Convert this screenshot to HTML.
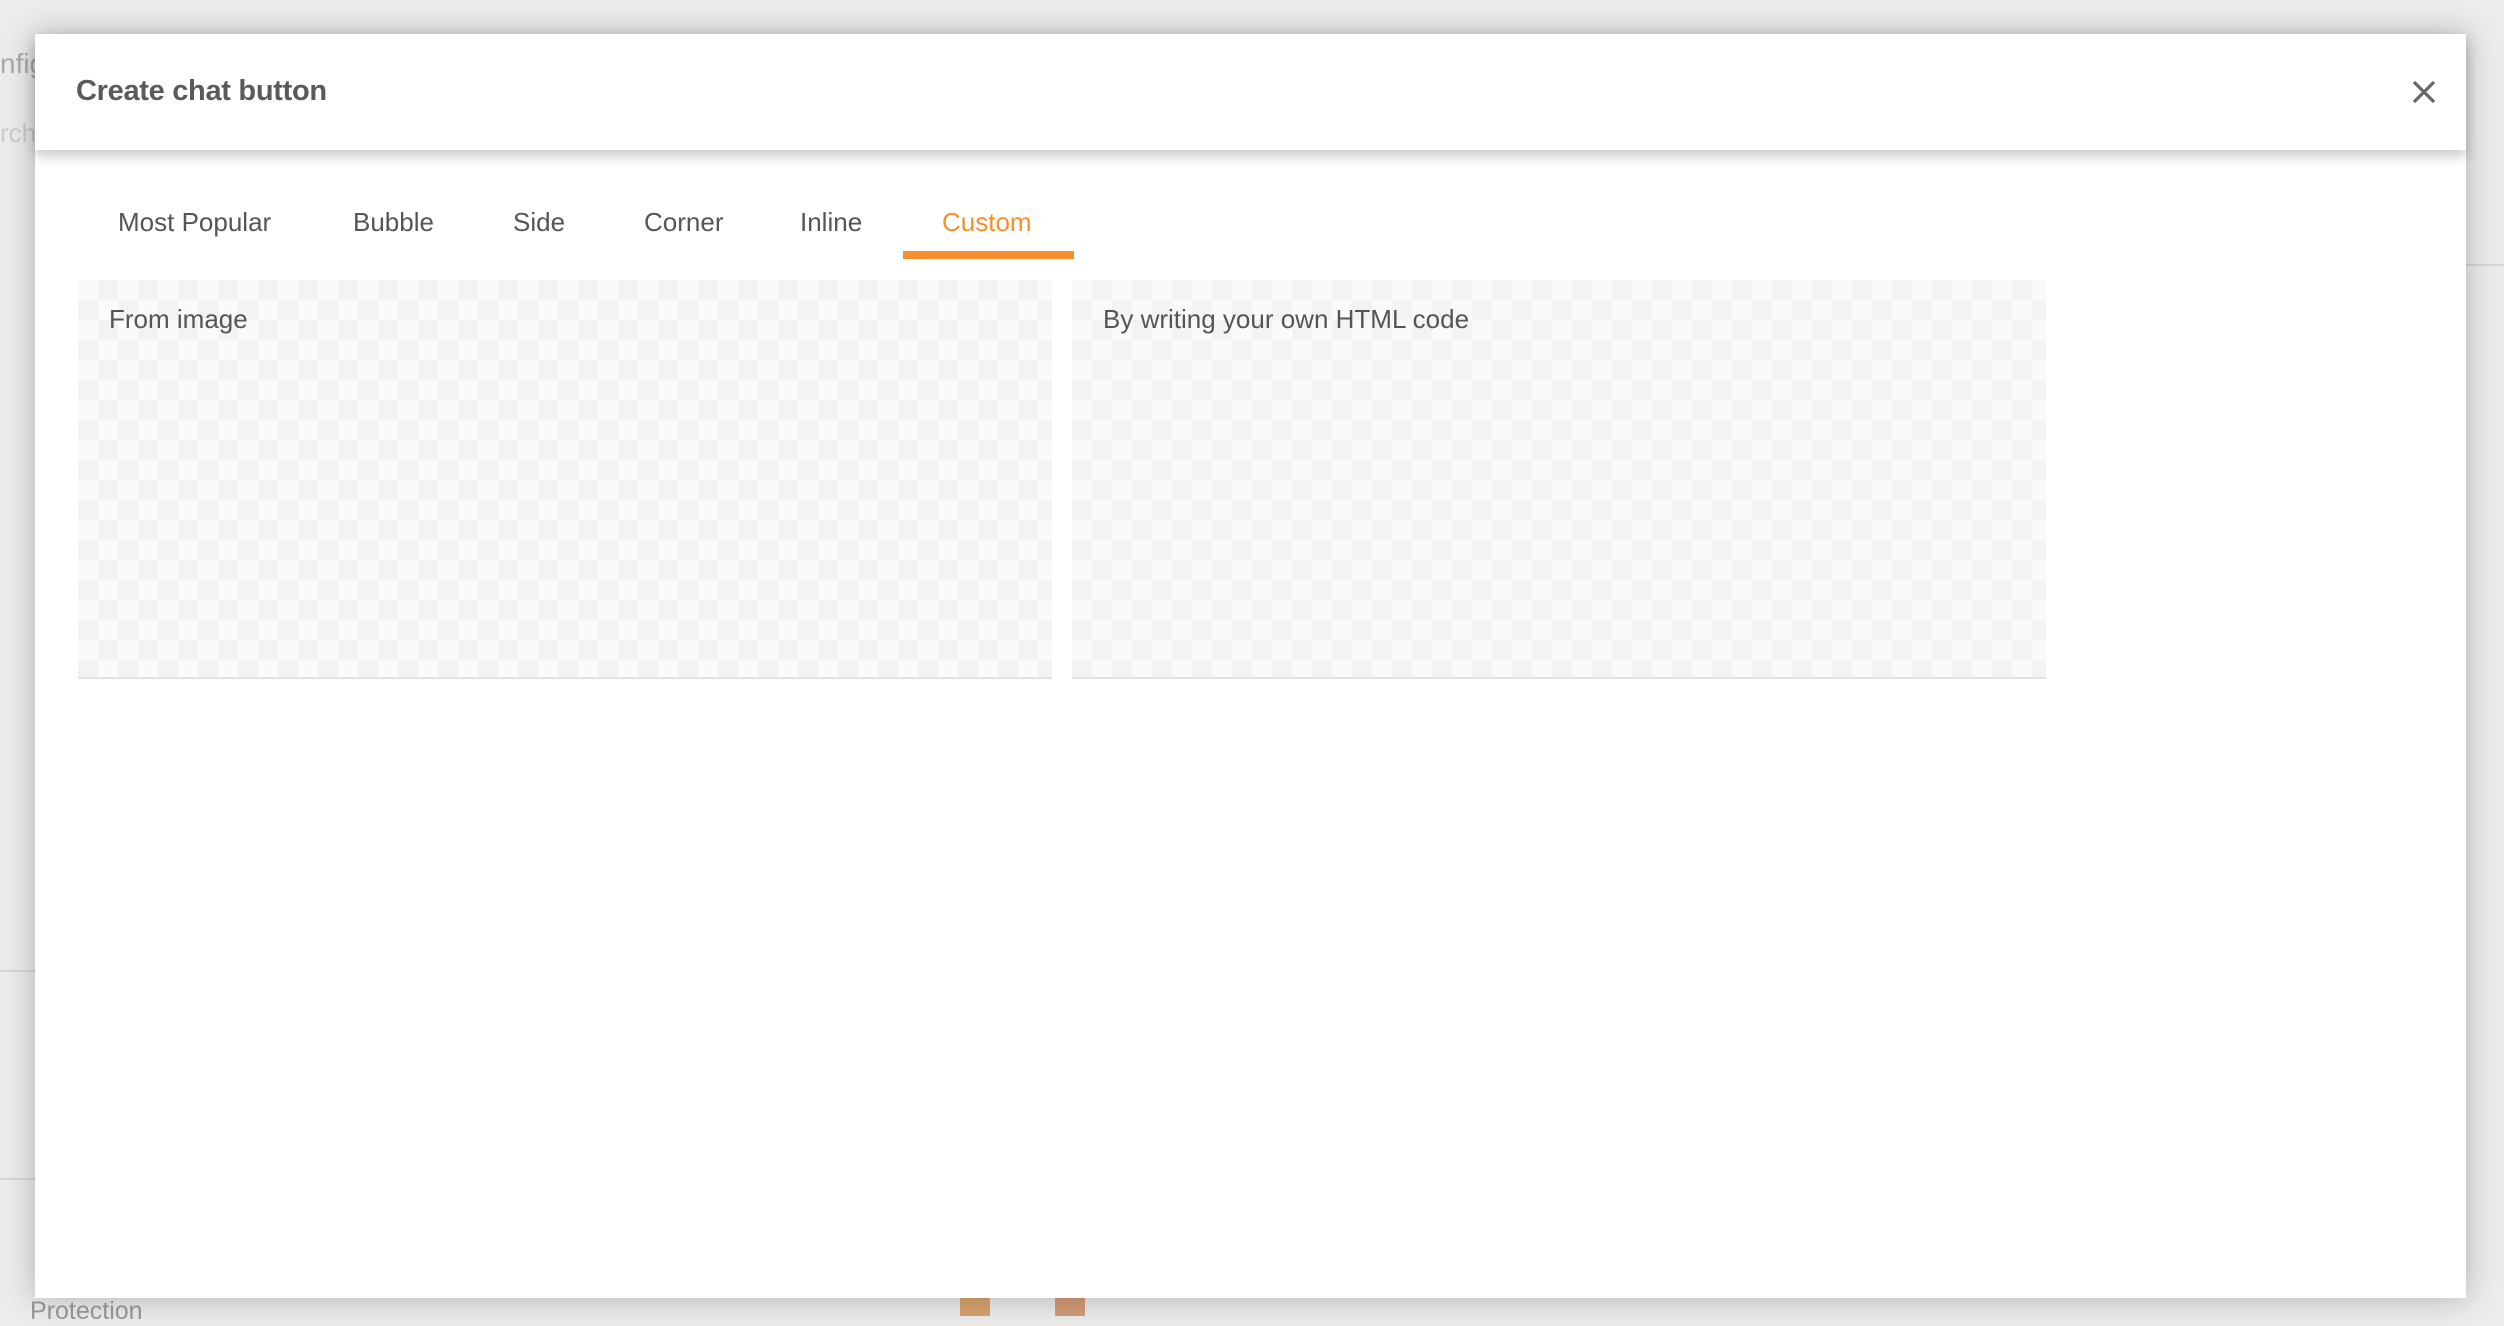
<!DOCTYPE html>
<html><head><meta charset="utf-8"><style>
html,body{margin:0;padding:0;width:2504px;height:1326px;overflow:hidden;background:#ececec;font-family:"Liberation Sans",sans-serif;}
.bg{position:absolute;color:#bdbdbd;font-size:26px;}
.modal{position:absolute;left:35px;top:34px;width:2431px;height:1264px;background:#fff;box-shadow:0 0 30px rgba(0,0,0,.25);}
.hdr{position:absolute;left:0;top:0;width:100%;height:116px;background:#fff;box-shadow:0 6px 12px rgba(0,0,0,.22);z-index:2;}
.title{position:absolute;left:41px;top:41px;font-size:29px;font-weight:bold;color:#5a5a5a;letter-spacing:-0.3px;}
.close{position:absolute;left:2377px;top:46px;}
.tab{position:absolute;top:173px;font-size:26px;color:#555;}
.ul{position:absolute;left:868px;top:217px;width:171px;height:8px;background:#f6902e;}
.card{position:absolute;top:246px;width:974px;height:397px;border-bottom:2px solid #e2e2e2;
background-color:#fafafa;
background-image:linear-gradient(45deg,#f3f3f3 25%,transparent 25%,transparent 75%,#f3f3f3 75%),linear-gradient(45deg,#f3f3f3 25%,transparent 25%,transparent 75%,#f3f3f3 75%);
background-size:40px 40px;background-position:0 0,20px 20px;}
.card span{position:absolute;left:31px;top:24px;font-size:26px;color:#555;}
</style></head><body>
<div class="bg" style="left:0;top:48px;font-size:28px;color:#aaa;">nfig</div>
<div class="bg" style="left:0;top:118px;color:#ccc;">rch</div>
<div class="bg" style="left:30px;top:1297px;color:#999;font-size:25px;">Protection</div>
<div style="position:absolute;left:0;top:970px;width:40px;height:2px;background:#d6d6d6"></div>
<div style="position:absolute;left:0;top:1178px;width:40px;height:2px;background:#d6d6d6"></div>
<div style="position:absolute;left:2466px;top:264px;width:38px;height:2px;background:#d6d6d6"></div>
<div style="position:absolute;left:960px;top:1298px;width:30px;height:18px;background:#d9a36c"></div>
<div style="position:absolute;left:1055px;top:1298px;width:30px;height:18px;background:#d49c78"></div>
<div class="modal">
 <div class="hdr">
  <div class="title">Create chat button</div>
  <svg class="close" width="24" height="24" viewBox="0 0 24 24"><path d="M2 2L22 22M22 2L2 22" stroke="#666" stroke-width="3.2"/></svg>
 </div>
 <div class="tab" style="left:83px">Most Popular</div>
 <div class="tab" style="left:318px">Bubble</div>
 <div class="tab" style="left:478px">Side</div>
 <div class="tab" style="left:609px">Corner</div>
 <div class="tab" style="left:765px">Inline</div>
 <div class="tab" style="left:907px;color:#f6902e">Custom</div>
 <div class="ul"></div>
 <div class="card" style="left:43px"><span>From image</span></div>
 <div class="card" style="left:1037px"><span>By writing your own HTML code</span></div>
</div>
</body></html>
